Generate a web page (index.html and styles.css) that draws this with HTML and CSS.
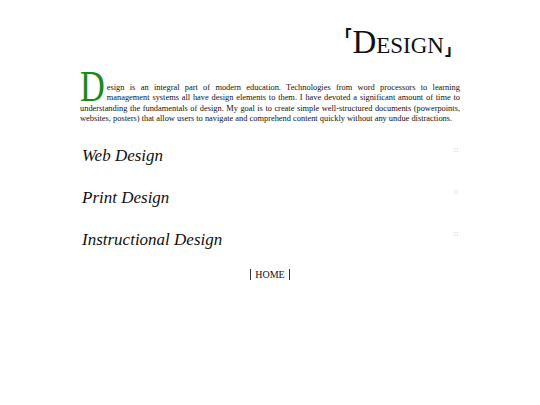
FILE: index.html
```html
<!DOCTYPE html>
<html>
<head>
<meta charset="utf-8">
<link rel="stylesheet" href="styles.css">
</head>
<body>
<div class="page">
  <h1 class="title"><span class="br br-open">「</span>Design<span class="br br-close">」</span></h1>
  <p class="intro"><span class="drop">D</span>esign is an integral part of modern education. Technologies from word processors to learning management systems all have design elements to them. I have devoted a significant amount of time to understanding the fundamentals of design. My goal is to create simple well-structured documents (powerpoints, websites, posters) that allow users to navigate and comprehend content quickly without any undue distractions.</p>
  <div class="items">
    <div class="item"><h2 class="item-title">Web Design</h2><span class="thumb"></span></div>
    <div class="item"><h2 class="item-title">Print Design</h2><span class="thumb"></span></div>
    <div class="item"><h2 class="item-title">Instructional Design</h2><span class="thumb"></span></div>
  </div>
  <div class="nav"><span class="nav-link">HOME</span></div>
</div>
</body>
</html>
```
FILE: styles.css
```css
html, body { margin: 0; padding: 0; background: #fff; }
body { font-family: "Liberation Serif", "Times New Roman", serif; color: #111; }
.page { width: 380px; margin: 0 auto; padding-top: 22px; }
.title { margin: 0; text-align: right; font-weight: normal; font-variant: small-caps; font-size: 33px; line-height: 40px; color: #111; }
.br { font-family: "Noto Sans CJK JP", sans-serif; font-size: 15px; font-weight: 900; display: inline-block; line-height: 15px; }
.br-open { vertical-align: 12px; margin-right: 1px; }
.br-close { vertical-align: -2px; margin-left: 1px; }
.intro { margin: 21px 0 0; font-size: 8.4px; line-height: 10.3px; text-align: justify; color: #111; }
.drop { float: left; font-size: 44px; line-height: 8.3px; height: 20px; color: #1a8a1a; margin: 0 -5px 0 0; transform: scaleX(0.78); transform-origin: 0 0; }
.items { margin-top: 22px; }
.item { display: flex; justify-content: space-between; align-items: flex-start; height: 42px; }
.item-title { margin: 0; font-weight: normal; font-style: italic; font-size: 17px; line-height: 20px; padding-left: 2px; }
.thumb { width: 2px; height: 2px; border: 1px solid #e6f0e6; margin-top: 2px; margin-right: 2px; }
.nav { text-align: center; margin-top: -3px; font-size: 10px; line-height: 12px; }
.nav-link { border-left: 1px solid #333; border-right: 1px solid #333; padding: 0 4px; }
```
